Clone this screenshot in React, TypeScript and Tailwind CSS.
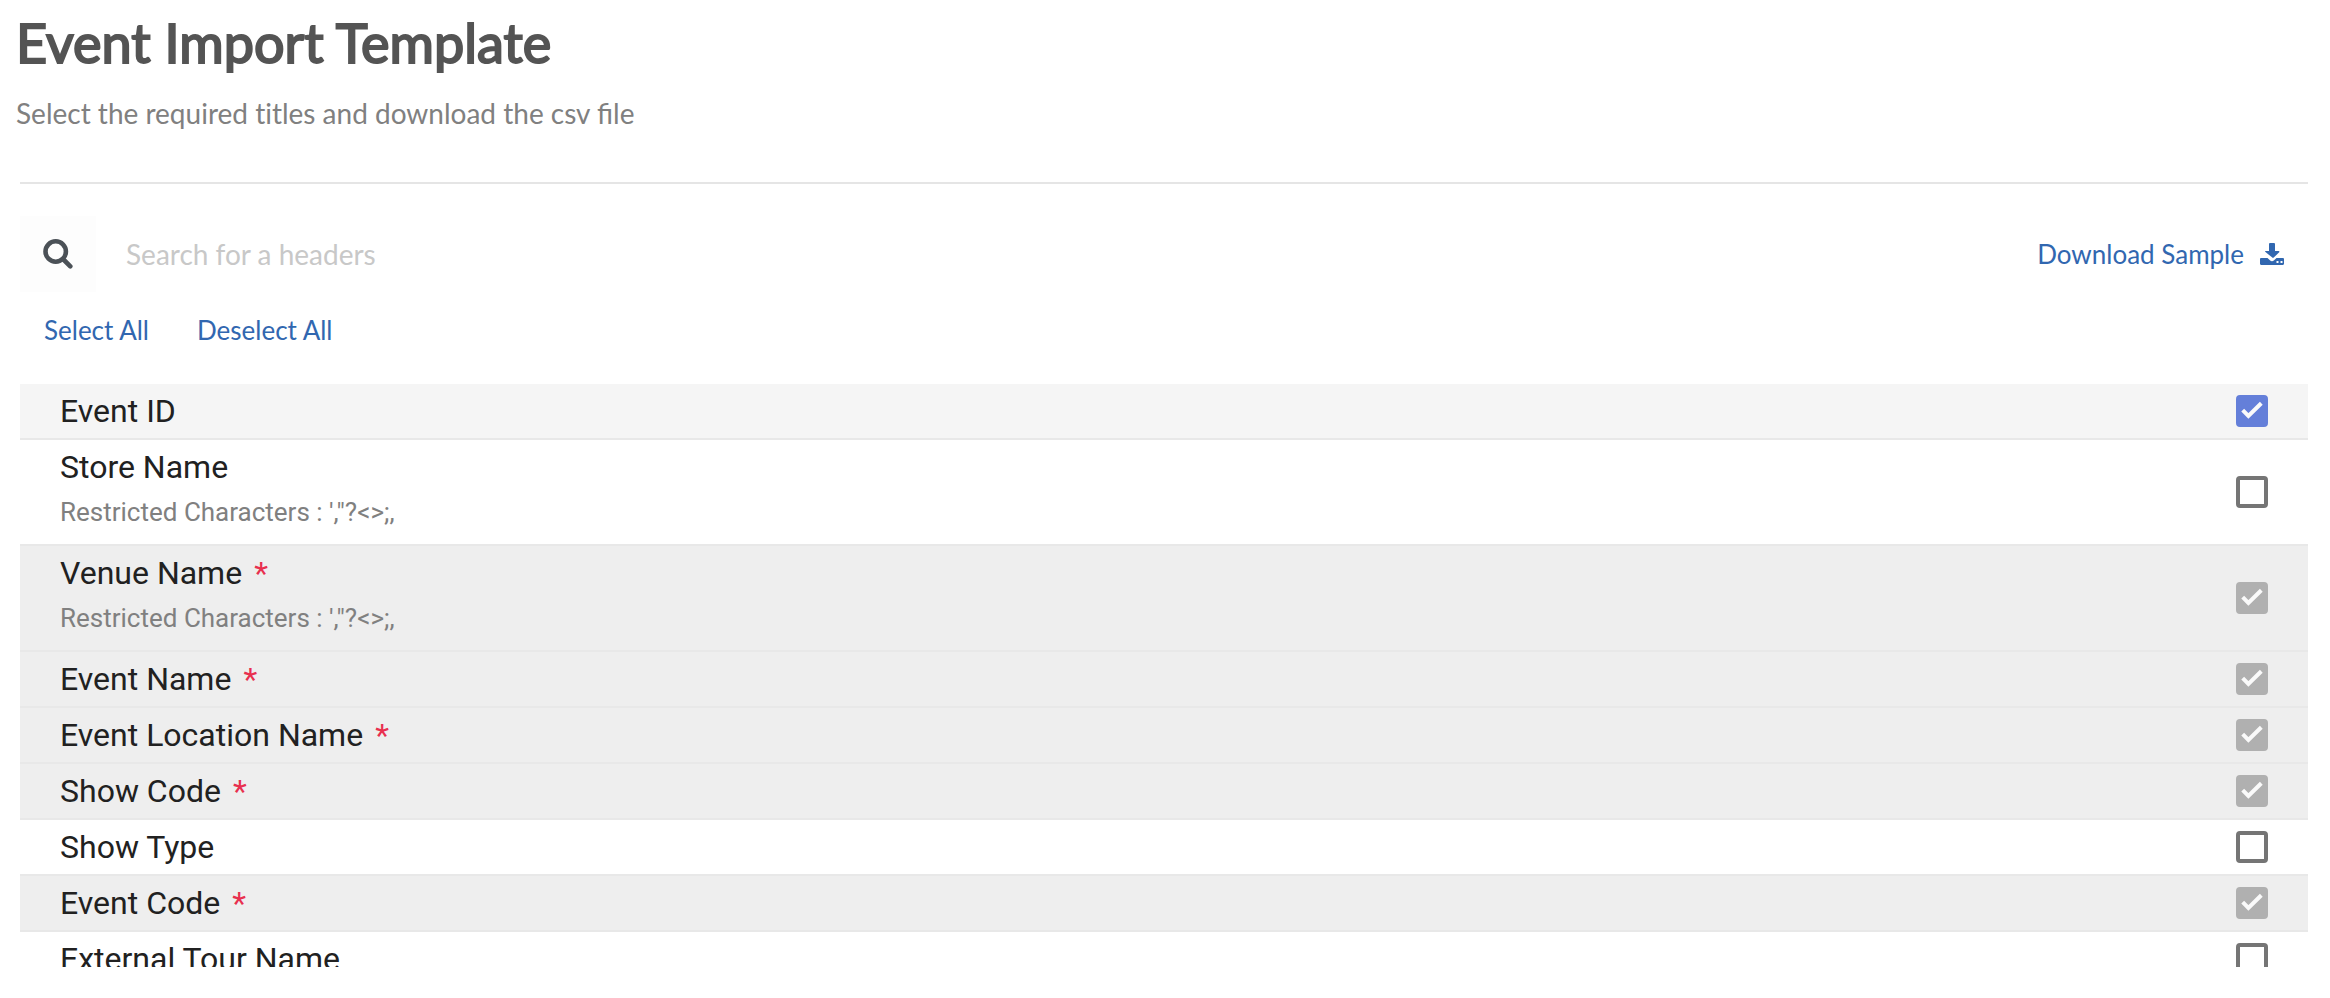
import { useState } from "react";

type Header = {
    name: string;
    note?: string;
    required?: boolean;
};

const RESTRICTED = "Restricted Characters : ',\"?<>;,";

const headers: Header[] = [
    { name: "Event ID" },
    { name: "Store Name", note: RESTRICTED },
    { name: "Venue Name", note: RESTRICTED, required: true },
    { name: "Event Name", required: true },
    { name: "Event Location Name", required: true },
    { name: "Show Code", required: true },
    { name: "Show Type" },
    { name: "Event Code", required: true },
    { name: "External Tour Name" },
];

const optional = headers.filter((h) => !h.required).map((h) => h.name);

function SearchIcon() {
    return (
        <svg viewBox="0 0 30 30" className="size-[30px]" fill="none" stroke="#4b5157" aria-hidden="true">
            <circle cx="12.7" cy="12.5" r="10.2" strokeWidth="4.6" />
            <path d="M20.5 20.5 27.3 27.3" strokeWidth="4.6" strokeLinecap="round" />
        </svg>
    );
}

function DownloadIcon() {
    return (
        <svg viewBox="0 0 24 22" className="h-[22px] w-6" fill="currentColor" aria-hidden="true">
            <path d="M9 1a1 1 0 0 1 1-1h4a1 1 0 0 1 1 1v7h3.6c.8 0 1.1.8.6 1.3l-5.5 5.3a1 1 0 0 1-1.400 0L5.800 9.300C5.300 8.800 4.600 8 5.400 8H9z" />
            <path
                fillRule="evenodd"
                d="M1.2 15h6.3l2.400 2.200a3 3 0 0 0 4.200 0l2.400-2.200h6.300c.7 0 1.200.5 1.200 1.200v4.600c0 .7-.5 1.200-1.200 1.200H1.200C.5 22 0 21.500 0 20.800v-4.600C0 15.500.5 15 1.200 15zm15.300 3v2h2v-2zm4 0v2h2v-2z"
            />
        </svg>
    );
}

function Tick() {
    return (
        <svg
            viewBox="0 0 32 32"
            className="pointer-events-none absolute inset-0 size-8"
            fill="none"
            stroke="#fafafa"
            strokeWidth="4"
            aria-hidden="true"
        >
            <path d="M6.7 15.2 12.4 21 25.3 8.3" />
        </svg>
    );
}

type RowProps = {
    header: Header;
    checked: boolean;
    onToggle: () => void;
};

function HeaderRow({ header, checked, onToggle }: RowProps) {
    const bg = header.required ? "bg-[#eeeeee]" : checked ? "bg-[#f5f5f5]" : "bg-white";

    return (
        <li className={`border-b-2 border-[#e8e8e8] ${bg}`}>
            <label className="flex items-center justify-between px-10">
                <span className="flex flex-col">
                    <span className="text-[32px] leading-[54px] text-[#212121]">
                        {header.name}
                        {header.required && <span className="ml-3 text-[#e8304f]">*</span>}
                    </span>
                    {header.note && (
                        <span className="pb-3.5 text-[26px] leading-9 text-[#808080]">{header.note}</span>
                    )}
                </span>
                <span className="relative size-8">
                    <input
                        type="checkbox"
                        checked={checked}
                        disabled={header.required}
                        onChange={onToggle}
                        className="block size-8 appearance-none rounded border-4 border-[#757575] checked:border-[#647fd9] checked:bg-[#647fd9] disabled:border-[#b0b0b0] disabled:bg-[#b0b0b0]"
                    />
                    {checked && <Tick />}
                </span>
            </label>
        </li>
    );
}

export default function App() {
    const [search, setSearch] = useState("");
    const [selected, setSelected] = useState<string[]>(["Event ID"]);

    const toggle = (name: string) =>
        setSelected((prev) => (prev.includes(name) ? prev.filter((n) => n !== name) : [...prev, name]));

    const visible = headers.filter((h) => h.name.toLowerCase().includes(search.toLowerCase()));

    return (
        <main className="flex h-screen flex-col bg-white pb-[31px] font-['Lato',sans-serif]">
            <header className="px-4 pt-[11px]">
                <h1 className="text-[54px] leading-16 font-normal text-[#545454] [-webkit-text-stroke:2px_#545454]">
                    Event Import Template
                </h1>
                <p className="pt-5 text-[28px] leading-9 text-[#808080]">
                    Select the required <span className="[font-variant-ligatures:none]">titles</span> and download the
                    csv file
                </p>
            </header>
            <section className="mt-[51px] mr-[22px] ml-5 flex min-h-0 flex-1 flex-col border-t-2 border-[#e5e5e5]">
                <div className="mt-8 flex h-19 items-center justify-between pr-6">
                    <div className="flex flex-1 items-center">
                        <label
                            htmlFor="search"
                            aria-label="Search"
                            className="flex size-19 items-center justify-center bg-[#fdfdfd]"
                        >
                            <SearchIcon />
                        </label>
                        <input
                            id="search"
                            type="text"
                            value={search}
                            onChange={(e) => setSearch(e.target.value)}
                            placeholder="Search for a headers"
                            className="ml-[30px] h-12 flex-1 text-[28px] text-[#545454] outline-none placeholder:text-[#c8c8c8]"
                        />
                    </div>
                    <a href="#sample" className="flex items-center gap-4 text-[26px] text-[#3167b0]">
                        Download Sample
                        <DownloadIcon />
                    </a>
                </div>
                <div className="flex gap-12 pt-5 pb-9 pl-6 text-[26px] leading-9 text-[#3167b0]">
                    <button type="button" onClick={() => setSelected(optional)}>
                        Select All
                    </button>
                    <button type="button" onClick={() => setSelected([])}>
                        Deselect All
                    </button>
                </div>
                <ul className="min-h-0 flex-1 overflow-y-auto font-['Roboto',sans-serif] [scrollbar-width:none]">
                    {visible.map((header) => (
                        <HeaderRow
                            key={header.name}
                            header={header}
                            checked={!!header.required || selected.includes(header.name)}
                            onToggle={() => toggle(header.name)}
                        />
                    ))}
                </ul>
            </section>
        </main>
    );
}
